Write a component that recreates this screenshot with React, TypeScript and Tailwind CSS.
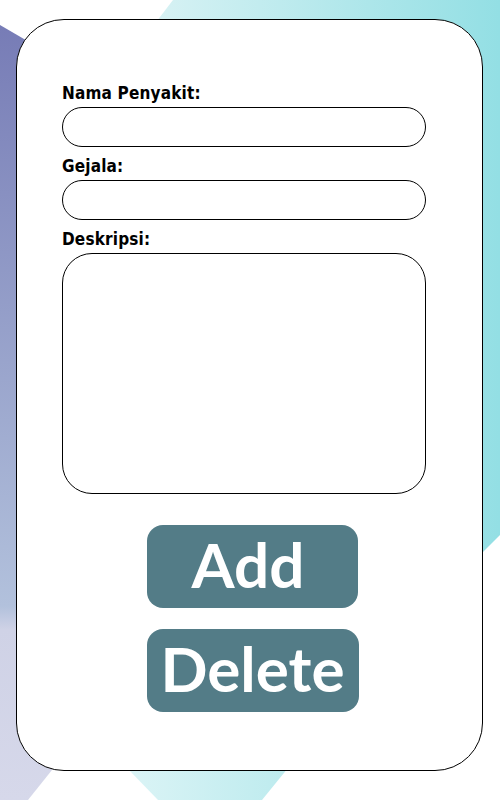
import React from 'react';

const Backdrop: React.FC = () => (
  <svg
    className="absolute inset-0 h-full w-full"
    viewBox="0 0 500 800"
    preserveAspectRatio="none"
    aria-hidden="true"
  >
    <defs>
      <linearGradient id="leftFade" x1="0" y1="0" x2="0" y2="1">
        <stop offset="0" stopColor="#777cb6" />
        <stop offset="0.75" stopColor="#b2c1dc" />
        <stop offset="0.78" stopColor="#cfd2e6" />
        <stop offset="1" stopColor="#d6d8ea" />
      </linearGradient>
      <linearGradient id="topTeal" x1="0" y1="0" x2="1" y2="0">
        <stop offset="0" stopColor="#d8f2f4" />
        <stop offset="1" stopColor="#93dfe4" />
      </linearGradient>
      <linearGradient id="bottomTeal" x1="0" y1="0" x2="1" y2="0">
        <stop offset="0" stopColor="#dbf4f6" />
        <stop offset="1" stopColor="#bdebee" />
      </linearGradient>
    </defs>
    <polygon points="0,25 60,60 60,760 28,800 0,800" fill="url(#leftFade)" />
    <polygon points="173,0 500,0 500,535 470,565 150,30" fill="url(#topTeal)" />
    <polygon points="127,768 288,768 262,800 158,800" fill="url(#bottomTeal)" />
  </svg>
);

type FieldProps = {
  label: string;
  tall?: boolean;
};

const Field: React.FC<FieldProps> = ({ label, tall }) => (
  <div className="flex flex-col">
    <label className="h-6 text-[17px] leading-5 font-bold tracking-[0.01em] text-black font-['DejaVu_Sans_Condensed','DejaVu_Sans',sans-serif]">
      {label}
    </label>
    {tall ? (
      <textarea className="h-[241px] w-full resize-none rounded-[30px] border border-black bg-white px-5 py-4 outline-none" />
    ) : (
      <input className="h-10 w-full rounded-full border border-black bg-white px-5 outline-none" />
    )}
  </div>
);

export default function App() {
  return (
    <div className="relative h-[800px] w-[500px] overflow-hidden bg-white">
      <Backdrop />
      <div className="relative ml-4 mt-[19px] flex h-[752px] w-[467px] flex-col rounded-[48px] border border-black bg-white pt-[63px]">
        <div className="ml-[45px] flex w-[364px] flex-col gap-[9px]">
          <Field label="Nama Penyakit:" />
          <Field label="Gejala:" />
          <Field label="Deskripsi:" tall />
        </div>
        <div className="mt-[31px] flex flex-col items-center gap-[21px] pl-[6px]">
          <button className="flex h-[83px] w-[211px] items-center justify-center rounded-2xl bg-[#537c87] pb-1 pr-[9px] text-[62px] font-bold text-white font-['Lato',sans-serif]">
            Add
          </button>
          <button className="flex h-[83px] w-[212px] items-center justify-center rounded-2xl bg-[#537c87] pb-1 text-[62px] font-bold text-white font-['Lato',sans-serif]">
            Delete
          </button>
        </div>
      </div>
    </div>
  );
}
